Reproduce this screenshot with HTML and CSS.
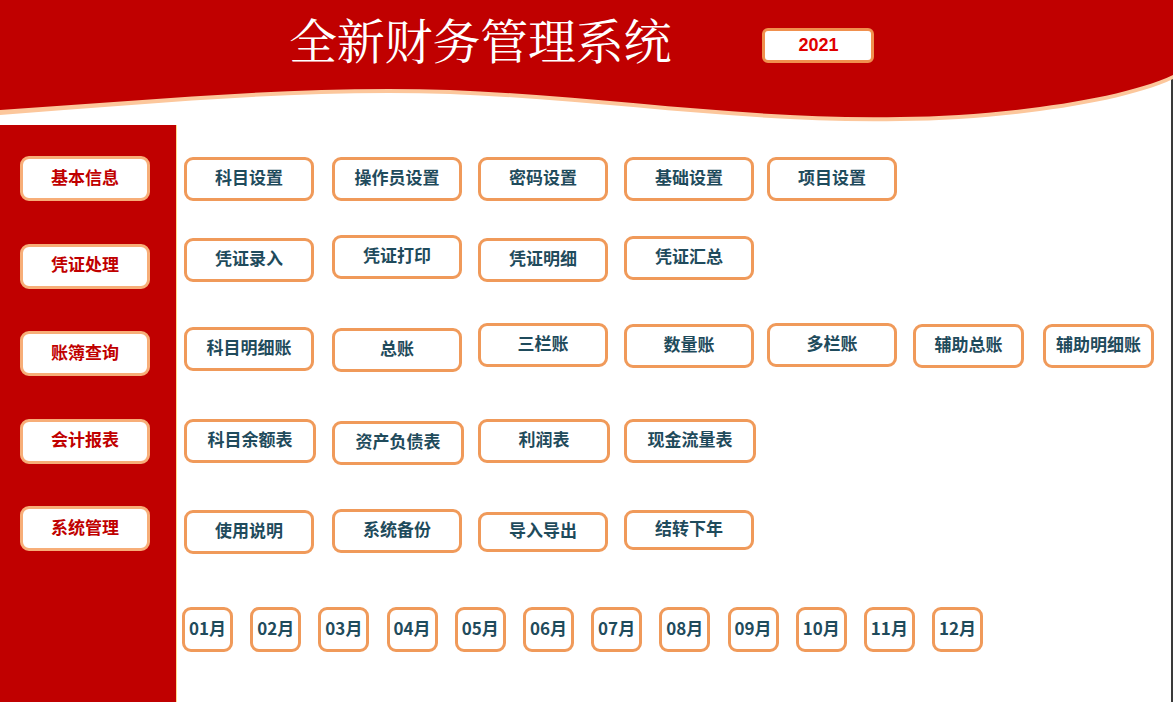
FILE: index.html
```html
<!DOCTYPE html>
<html lang="zh-CN">
<head>
<meta charset="utf-8">
<title>全新财务管理系统</title>
<link rel="stylesheet" href="styles.css">
</head>
<body>
<div class="page">
  <header class="header">
    <svg class="wave" viewBox="0 0 1173 125" width="1173" height="125" preserveAspectRatio="none" aria-hidden="true">
      <path d="M0,0 H1173 V79 C1120,104 1000,120 900,121 C750,124 600,100 450,94 C300,89 150,104 0,115 Z" fill="#fcc79c"/>
      <path d="M0,0 H1173 V75 C1120,100 1000,116 900,117 C750,120 600,96 450,90 C300,85 150,100 0,110 Z" fill="#c00000"/>
    </svg>
    <h1 class="title">全新财务管理系统</h1>
    <div class="year">2021</div>
  </header>
  <div class="main">
    <nav class="sidebar">
      <div class="side-btn">基本信息</div>
      <div class="side-btn">凭证处理</div>
      <div class="side-btn">账簿查询</div>
      <div class="side-btn">会计报表</div>
      <div class="side-btn">系统管理</div>
    </nav>
    <section class="content">
      <div class="row r1">
        <div class="btn">科目设置</div>
        <div class="btn">操作员设置</div>
        <div class="btn">密码设置</div>
        <div class="btn">基础设置</div>
        <div class="btn">项目设置</div>
      </div>
      <div class="row r2">
        <div class="btn d3">凭证录入</div>
        <div class="btn">凭证打印</div>
        <div class="btn d3">凭证明细</div>
        <div class="btn d1">凭证汇总</div>
      </div>
      <div class="row r3">
        <div class="btn d4">科目明细账</div>
        <div class="btn d5">总账</div>
        <div class="btn">三栏账</div>
        <div class="btn d1">数量账</div>
        <div class="btn">多栏账</div>
        <div class="btn narrow d1">辅助总账</div>
        <div class="btn narrow d1">辅助明细账</div>
      </div>
      <div class="row r4">
        <div class="btn wide">科目余额表</div>
        <div class="btn wide d2">资产负债表</div>
        <div class="btn wide">利润表</div>
        <div class="btn wide">现金流量表</div>
      </div>
      <div class="row r5">
        <div class="btn d1">使用说明</div>
        <div class="btn">系统备份</div>
        <div class="btn d3 short">导入导出</div>
        <div class="btn d1 short">结转下年</div>
      </div>
      <div class="months">
        <div class="month">01月</div>
        <div class="month">02月</div>
        <div class="month">03月</div>
        <div class="month">04月</div>
        <div class="month">05月</div>
        <div class="month">06月</div>
        <div class="month">07月</div>
        <div class="month">08月</div>
        <div class="month">09月</div>
        <div class="month">10月</div>
        <div class="month">11月</div>
        <div class="month">12月</div>
      </div>
    </section>
  </div>
</div>
</body>
</html>
```
FILE: styles.css
```css
* {
  box-sizing: border-box;
}

html, body {
  margin: 0;
  padding: 0;
  background: #ffffff;
}

body {
  width: 1173px;
  height: 702px;
  overflow: hidden;
  font-family: "Noto Sans CJK SC", "Noto Sans", sans-serif;
}

.page {
  width: 1173px;
  height: 702px;
  position: relative;
  border-right: 2px solid #3a3a3a;
}

.header {
  position: relative;
  height: 125px;
  display: flex;
  align-items: flex-start;
  padding-left: 289px;
}

.wave {
  position: absolute;
  left: 0;
  top: 0;
  z-index: 0;
}

.title {
  position: relative;
  z-index: 1;
  margin: 10px 0 0 0;
  font-family: "Noto Serif CJK SC", "AR PL UMing CN", "Noto Sans CJK SC", serif;
  font-weight: 400;
  font-size: 48px;
  line-height: 58px;
  letter-spacing: -0.2px;
  color: #ffffff;
  white-space: nowrap;
}

.year {
  position: relative;
  z-index: 1;
  margin: 28px 0 0 91px;
  width: 112px;
  height: 35px;
  background: #ffffff;
  border: 3px solid #f0904e;
  border-radius: 6px;
  display: flex;
  align-items: center;
  justify-content: center;
  padding-bottom: 1px;
  font-family: "Liberation Sans", Arial, sans-serif;
  font-weight: 700;
  font-size: 18px;
  color: #e00000;
}

.main {
  display: flex;
  height: 577px;
}

.sidebar {
  width: 177px;
  flex-shrink: 0;
  background: #c00000;
  border-right: 1px solid #ffd98a;
  padding: 31px 0 0 20px;
  display: flex;
  flex-direction: column;
  gap: 42.5px;
}

.side-btn {
  width: 130px;
  height: 45px;
  background: #ffffff;
  border: 3px solid #f7ae78;
  border-radius: 9px;
  display: flex;
  align-items: center;
  justify-content: center;
  padding-bottom: 5px;
  font-weight: 700;
  font-size: 17px;
  color: #c00000;
}

.content {
  flex: 1;
  padding: 32px 0 0 7px;
}

.row {
  display: grid;
  grid-template-columns: 148px 146px 146px 143px 146px 130px 130px;
  grid-template-rows: 44px;
  height: 44px;
  align-items: start;
}

.r2 { margin-top: 34px; }
.r3 { margin-top: 44px; }
.r4 { margin-top: 52px; }
.r5 { margin-top: 46px; }

.btn {
  width: 130px;
  height: 44px;
  background: #ffffff;
  border: 3px solid #f09a5a;
  border-radius: 9px;
  display: flex;
  align-items: center;
  justify-content: center;
  padding-bottom: 5px;
  font-weight: 700;
  font-size: 17px;
  color: #1f4b5c;
  white-space: nowrap;
}

.btn.narrow { width: 111px; }
.btn.wide { width: 132px; }
.btn.short { height: 40px; }

.d1 { margin-top: 1px; }
.d2 { margin-top: 2px; }
.d3 { margin-top: 3px; }
.d4 { margin-top: 4px; }
.d5 { margin-top: 5px; }

.months {
  margin: 54px 0 0 -2px;
  display: flex;
  gap: 17.2px;
}

.month {
  width: 51px;
  height: 45px;
  background: #ffffff;
  border: 3px solid #f09a5a;
  border-radius: 9px;
  display: flex;
  align-items: center;
  justify-content: center;
  padding-bottom: 4px;
  font-weight: 700;
  font-size: 17px;
  color: #1f4b5c;
  white-space: nowrap;
}
```
